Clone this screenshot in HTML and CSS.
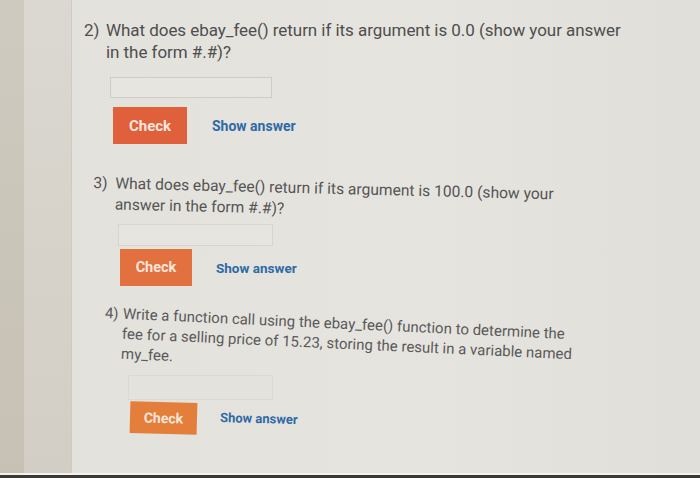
FILE: index.html
```html
<!DOCTYPE html>
<html>
<head>
<meta charset="utf-8">
<link rel="stylesheet" href="styles.css">
</head>
<body>
<div class="screen">
  <div class="bezel"></div>
  <div class="sidebar"></div>
  <div class="content">
    <section class="q q2">
      <div class="qtext"><span class="num">2)</span><p>What does ebay_fee() return if its argument is 0.0 (show your answer in the form #.#)?</p></div>
      <div class="answer"></div>
      <div class="actions"><button class="check">Check</button><a class="show">Show answer</a></div>
    </section>
    <section class="q q3">
      <div class="qtext"><span class="num">3)</span><p>What does ebay_fee() return if its argument is 100.0 (show your answer in the form #.#)?</p></div>
      <div class="answer"></div>
      <div class="actions"><button class="check">Check</button><a class="show">Show answer</a></div>
    </section>
    <section class="q q4">
      <div class="qtext"><span class="num">4)</span><p>Write a function call using the ebay_fee() function to determine the fee for a selling price of 15.23, storing the result in a variable named my_fee.</p></div>
      <div class="answer"></div>
      <div class="actions"><button class="check">Check</button><a class="show">Show answer</a></div>
    </section>
  </div>
</div>
<div class="edge"></div>
</body>
</html>
```
FILE: styles.css
```css
html, body {
  margin: 0;
  padding: 0;
}
body {
  width: 700px;
  height: 478px;
  overflow: hidden;
  background: #3a3936;
  font-family: Roboto, "Liberation Sans", sans-serif;
}
.screen {
  height: 473px;
  display: flex;
  background: linear-gradient(90deg, #e3e1dc 0%, #e6e4df 60%, #e1dfda 100%);
}
.bezel {
  width: 24px;
  background: linear-gradient(180deg, #cfcabf 0%, #c6c1b4 100%);
}
.sidebar {
  width: 47px;
  background: linear-gradient(180deg, #dbd8d1 0%, #d2cec5 100%);
  border-right: 1px solid #cfcbc2;
}
.content {
  flex: 1;
  display: flex;
  flex-direction: column;
}
.edge {
  height: 2px;
  background: #f3f2ee;
}
.q {
  display: flex;
  flex-direction: column;
  align-items: flex-start;
}
.qtext {
  display: flex;
  transform-origin: left center;
}
.qtext p {
  margin: 0;
}
.num {
  flex: none;
}
.answer {
  box-sizing: border-box;
  border: 1px solid #cfccc6;
  background: #e7e5e0;
}
.actions {
  display: flex;
  align-items: center;
}
.check {
  box-sizing: border-box;
  border: none;
  font-family: Roboto, "Liberation Sans", sans-serif;
  font-weight: 700;
  color: #fbe6dc;
  padding: 0;
}
.show {
  font-weight: 700;
  color: #2f6aa6;
}

/* question 2 */
.q2 {
  margin: 19px 0 0 12px;
  color: #4e4e4e;
}
.q2 .qtext {
  font-size: 17px;
  line-height: 22px;
  width: 550px;
  letter-spacing: -0.05px;
}
.q2 .num { width: 22px; }
.q2 .answer {
  width: 162px;
  height: 21px;
  margin: 14px 0 0 26px;
}
.q2 .actions {
  margin: 9px 0 0 29px;
  gap: 25px;
}
.q2 .check {
  width: 74px;
  height: 37px;
  background: #e0603b;
  font-size: 15px;
}
.q2 .show { font-size: 14px; }

/* question 3 */
.q3 {
  margin: 29px 0 0 21px;
  color: #555;
}
.q3 .qtext {
  font-size: 15.6px;
  line-height: 21px;
  width: 470px;
  transform: rotate(1.4deg);
}
.q3 .num { width: 22px; }
.q3 .answer {
  width: 155px;
  height: 22px;
  margin: 9px 0 0 25px;
  border-color: #d8d5cf;
}
.q3 .actions {
  margin: 3px 0 0 27px;
  gap: 24px;
}
.q3 .check {
  width: 72px;
  height: 37px;
  background: #e3703f;
  font-size: 14.5px;
}
.q3 .show { font-size: 13.5px; }

/* question 4 */
.q4 {
  margin: 17px 0 0 32px;
  color: #5a5a5a;
}
.q4 .qtext {
  font-size: 15px;
  line-height: 20px;
  width: 470px;
  transform: rotate(2.6deg);
}
.q4 .num { width: 18px; }
.q4 .answer {
  width: 145px;
  height: 25px;
  margin: 12px 0 0 24px;
  border-color: #dcd9d3;
  background: #e4e2dd;
}
.q4 .actions {
  margin: 2px 0 0 26px;
  gap: 23px;
}
.q4 .check {
  width: 67px;
  height: 32px;
  background: #e47e3b;
  font-size: 14px;
  transform: rotate(1.5deg);
}
.q4 .show { font-size: 13px; transform: rotate(1.5deg); }
```
